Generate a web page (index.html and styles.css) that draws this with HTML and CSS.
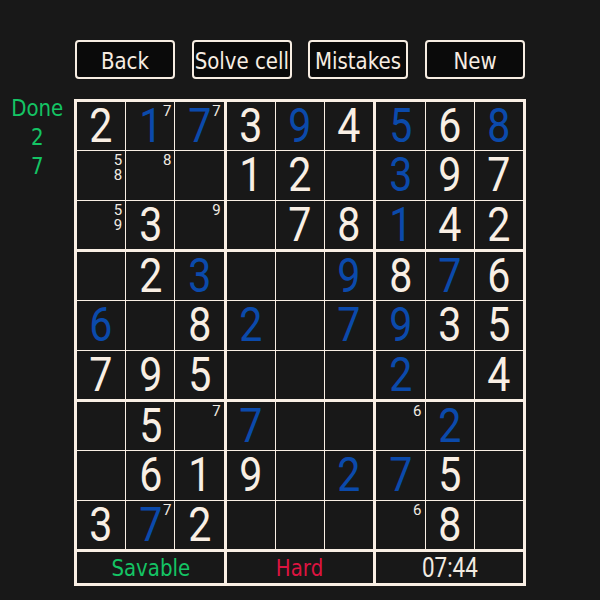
FILE: index.html
```html
<!DOCTYPE html>
<html>
<head>
<meta charset="utf-8">
<link rel="stylesheet" href="styles.css">
</head>
<body>
<div class="app">
  <div class="toolbar">
    <button class="btn"><span class="tx">Back</span></button>
    <button class="btn"><span class="tx">Solve cell</span></button>
    <button class="btn"><span class="tx">Mistakes</span></button>
    <button class="btn"><span class="tx">New</span></button>
  </div>
  <div class="main">
    <div class="side">
      <div class="side-line"><span class="tx">Done</span></div>
      <div class="side-line"><span class="tx">2</span></div>
      <div class="side-line"><span class="tx">7</span></div>
    </div>
    <div class="board">
      <div class="grid">
        <div class="box">
          <div class="cell"><span class="d">2</span></div>
          <div class="cell"><span class="d u">1</span><span class="pm"><span class="pd">7</span></span></div>
          <div class="cell"><span class="d u">7</span><span class="pm"><span class="pd">7</span></span></div>
          <div class="cell"><span class="pm"><span class="pd">5</span><span class="pd">8</span></span></div>
          <div class="cell"><span class="pm"><span class="pd">8</span></span></div>
          <div class="cell"></div>
          <div class="cell"><span class="pm"><span class="pd">5</span><span class="pd">9</span></span></div>
          <div class="cell"><span class="d">3</span></div>
          <div class="cell"><span class="pm"><span class="pd">9</span></span></div>
        </div>
        <div class="box">
          <div class="cell"><span class="d">3</span></div>
          <div class="cell"><span class="d u">9</span></div>
          <div class="cell"><span class="d">4</span></div>
          <div class="cell"><span class="d">1</span></div>
          <div class="cell"><span class="d">2</span></div>
          <div class="cell"></div>
          <div class="cell"></div>
          <div class="cell"><span class="d">7</span></div>
          <div class="cell"><span class="d">8</span></div>
        </div>
        <div class="box">
          <div class="cell"><span class="d u">5</span></div>
          <div class="cell"><span class="d">6</span></div>
          <div class="cell"><span class="d u">8</span></div>
          <div class="cell"><span class="d u">3</span></div>
          <div class="cell"><span class="d">9</span></div>
          <div class="cell"><span class="d">7</span></div>
          <div class="cell"><span class="d u">1</span></div>
          <div class="cell"><span class="d">4</span></div>
          <div class="cell"><span class="d">2</span></div>
        </div>
        <div class="box">
          <div class="cell"></div>
          <div class="cell"><span class="d">2</span></div>
          <div class="cell"><span class="d u">3</span></div>
          <div class="cell"><span class="d u">6</span></div>
          <div class="cell"></div>
          <div class="cell"><span class="d">8</span></div>
          <div class="cell"><span class="d">7</span></div>
          <div class="cell"><span class="d">9</span></div>
          <div class="cell"><span class="d">5</span></div>
        </div>
        <div class="box">
          <div class="cell"></div>
          <div class="cell"></div>
          <div class="cell"><span class="d u">9</span></div>
          <div class="cell"><span class="d u">2</span></div>
          <div class="cell"></div>
          <div class="cell"><span class="d u">7</span></div>
          <div class="cell"></div>
          <div class="cell"></div>
          <div class="cell"></div>
        </div>
        <div class="box">
          <div class="cell"><span class="d">8</span></div>
          <div class="cell"><span class="d u">7</span></div>
          <div class="cell"><span class="d">6</span></div>
          <div class="cell"><span class="d u">9</span></div>
          <div class="cell"><span class="d">3</span></div>
          <div class="cell"><span class="d">5</span></div>
          <div class="cell"><span class="d u">2</span></div>
          <div class="cell"></div>
          <div class="cell"><span class="d">4</span></div>
        </div>
        <div class="box">
          <div class="cell"></div>
          <div class="cell"><span class="d">5</span></div>
          <div class="cell"><span class="pm"><span class="pd">7</span></span></div>
          <div class="cell"></div>
          <div class="cell"><span class="d">6</span></div>
          <div class="cell"><span class="d">1</span></div>
          <div class="cell"><span class="d">3</span></div>
          <div class="cell"><span class="d u">7</span><span class="pm"><span class="pd">7</span></span></div>
          <div class="cell"><span class="d">2</span></div>
        </div>
        <div class="box">
          <div class="cell"><span class="d u">7</span></div>
          <div class="cell"></div>
          <div class="cell"></div>
          <div class="cell"><span class="d">9</span></div>
          <div class="cell"></div>
          <div class="cell"><span class="d u">2</span></div>
          <div class="cell"></div>
          <div class="cell"></div>
          <div class="cell"></div>
        </div>
        <div class="box">
          <div class="cell"><span class="pm"><span class="pd">6</span></span></div>
          <div class="cell"><span class="d u">2</span></div>
          <div class="cell"></div>
          <div class="cell"><span class="d u">7</span></div>
          <div class="cell"><span class="d">5</span></div>
          <div class="cell"></div>
          <div class="cell"><span class="pm"><span class="pd">6</span></span></div>
          <div class="cell"><span class="d">8</span></div>
          <div class="cell"></div>
        </div>
      </div>
      <div class="status">
        <div class="st"><span class="tx green">Savable</span></div>
        <div class="st"><span class="tx red">Hard</span></div>
        <div class="st"><span class="time">07:44</span></div>
      </div>
    </div>
  </div>
</div>
</body>
</html>
```

FILE: styles.css
```css
html, body {
  margin: 0;
  padding: 0;
  background: #181818;
}
.app {
  padding-top: 40px;
  width: 600px;
  height: 560px;
}
.tx {
  display: inline-block;
  font-family: "DejaVu Sans", sans-serif;
  font-size: 23px;
  line-height: 26px;
  transform: scaleX(0.86);
  white-space: nowrap;
}
.toolbar {
  margin-left: 75px;
  width: 450px;
  height: 39px;
  display: flex;
  justify-content: space-between;
}
.btn {
  width: 100px;
  height: 39px;
  box-sizing: border-box;
  margin: 0;
  padding: 3px 0 0;
  background: #0a0a0a;
  border: 2px solid #f7ede2;
  border-radius: 4px;
  color: #f7ede2;
  display: flex;
  align-items: center;
  justify-content: center;
}
.main {
  display: flex;
  margin-top: 20px;
}
.side {
  width: 74px;
  color: #14c464;
  text-align: center;
  margin-top: -4px;
}
.side-line {
  height: 29px;
  line-height: 29px;
}
.board {
  width: 452px;
}
.grid {
  display: grid;
  grid-template-columns: repeat(3, 1fr);
  gap: 3px;
  padding: 3px;
  background: #f9efe4;
}
.box {
  display: grid;
  grid-template-columns: repeat(3, 1fr);
  grid-template-rows: repeat(3, 1fr);
  gap: 1px;
  height: 147px;
}
.cell {
  position: relative;
  background: #181818;
  display: flex;
  align-items: center;
  justify-content: center;
}
.d {
  display: inline-block;
  font-family: Roboto, sans-serif;
  font-size: 49px;
  line-height: 40px;
  color: #f9efe4;
  transform: scaleX(0.84);
}
.d.u {
  color: #0b4aab;
}
.pm {
  position: absolute;
  top: 2px;
  right: 3px;
  display: flex;
  flex-direction: column;
  align-items: flex-end;
}
.pd {
  display: block;
  font-family: Roboto, sans-serif;
  font-size: 15px;
  line-height: 15px;
  height: 15px;
  color: #f2ebe2;
}
.status {
  display: grid;
  grid-template-columns: repeat(3, 1fr);
  gap: 3px;
  padding: 0 3px 3px;
  background: #f9efe4;
}
.st {
  height: 31px;
  background: #181818;
  display: flex;
  align-items: center;
  justify-content: center;
}
.green {
  color: #14c464;
}
.red {
  color: #dc1440;
}
.time {
  display: inline-block;
  font-family: Roboto, sans-serif;
  font-size: 28px;
  line-height: 30px;
  color: #f2ebe2;
  transform: scaleX(0.8);
}
```
